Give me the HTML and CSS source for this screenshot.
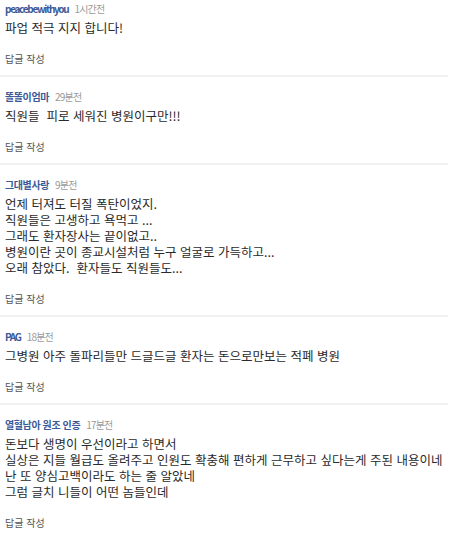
FILE: index.html
```html
<!DOCTYPE html>
<html lang="ko">
<head>
<meta charset="utf-8">
<link rel="stylesheet" href="styles.css">
</head>
<body>
<div class="comments">
  <div class="comment">
    <div class="meta"><span class="name latin">peacebewithyou</span><span class="time">1시간전</span></div>
    <div class="text">파업 적극 지지 합니다!</div>
    <div class="reply">답글 작성</div>
  </div>
  <div class="comment">
    <div class="meta"><span class="name">똘똘이엄마</span><span class="time">29분전</span></div>
    <div class="text">직원들&nbsp; 피로 세워진 병원이구만!!!</div>
    <div class="reply">답글 작성</div>
  </div>
  <div class="comment">
    <div class="meta"><span class="name">그대별사랑</span><span class="time">9분전</span></div>
    <div class="text">언제 터져도 터질 폭탄이었지.<br>직원들은 고생하고 욕먹고 ...<br>그래도 환자장사는 끝이없고..<br>병원이란 곳이 종교시설처럼 누구 얼굴로 가득하고...<br>오래 참았다.&nbsp; 환자들도 직원들도...</div>
    <div class="reply">답글 작성</div>
  </div>
  <div class="comment">
    <div class="meta"><span class="name latin">PAG</span><span class="time">18분전</span></div>
    <div class="text">그병원 아주 돌파리들만 드글드글 환자는 돈으로만보는 적폐 병원</div>
    <div class="reply">답글 작성</div>
  </div>
  <div class="comment">
    <div class="meta"><span class="name">열혈남아 원조 인증</span><span class="time">17분전</span></div>
    <div class="text">돈보다 생명이 우선이라고 하면서<br>실상은 지들 월급도 올려주고 인원도 확충해 편하게 근무하고 싶다는게 주된 내용이네<br>난 또 양심고백이라도 하는 줄 알았네<br>그럼 글치 니들이 어떤 놈들인데</div>
    <div class="reply">답글 작성</div>
  </div>
</div>
</body>
</html>
```
FILE: styles.css
```css
html, body {
  margin: 0;
  padding: 0;
  background: #ffffff;
}
body {
  font-family: "Noto Sans CJK KR", "Noto Sans", "Liberation Sans", sans-serif;
  width: 450px;
  overflow: hidden;
}
.comments {
  display: flex;
  flex-direction: column;
  width: 448px;
}
.comment {
  padding: 13px 5px 9px;
  border-bottom: 2px solid #f1f1f1;
}
.comment:first-child {
  padding-top: 2px;
}
.meta {
  display: flex;
  align-items: baseline;
  gap: 6px;
  height: 14px;
  line-height: 14px;
}
.name {
  font-size: 10px;
  font-weight: bold;
  color: #3b5998;
  letter-spacing: -0.4px;
}
.name.latin {
  letter-spacing: -1.3px;
}
.time {
  font-size: 10px;
  color: #9a9a9a;
  letter-spacing: -0.8px;
}
.text {
  margin-top: 4px;
  font-size: 12.5px;
  line-height: 16px;
  color: #2a2a2a;
  white-space: nowrap;
}
.reply {
  margin-top: 16px;
  font-size: 10px;
  line-height: 14px;
  color: #555555;
}
```
